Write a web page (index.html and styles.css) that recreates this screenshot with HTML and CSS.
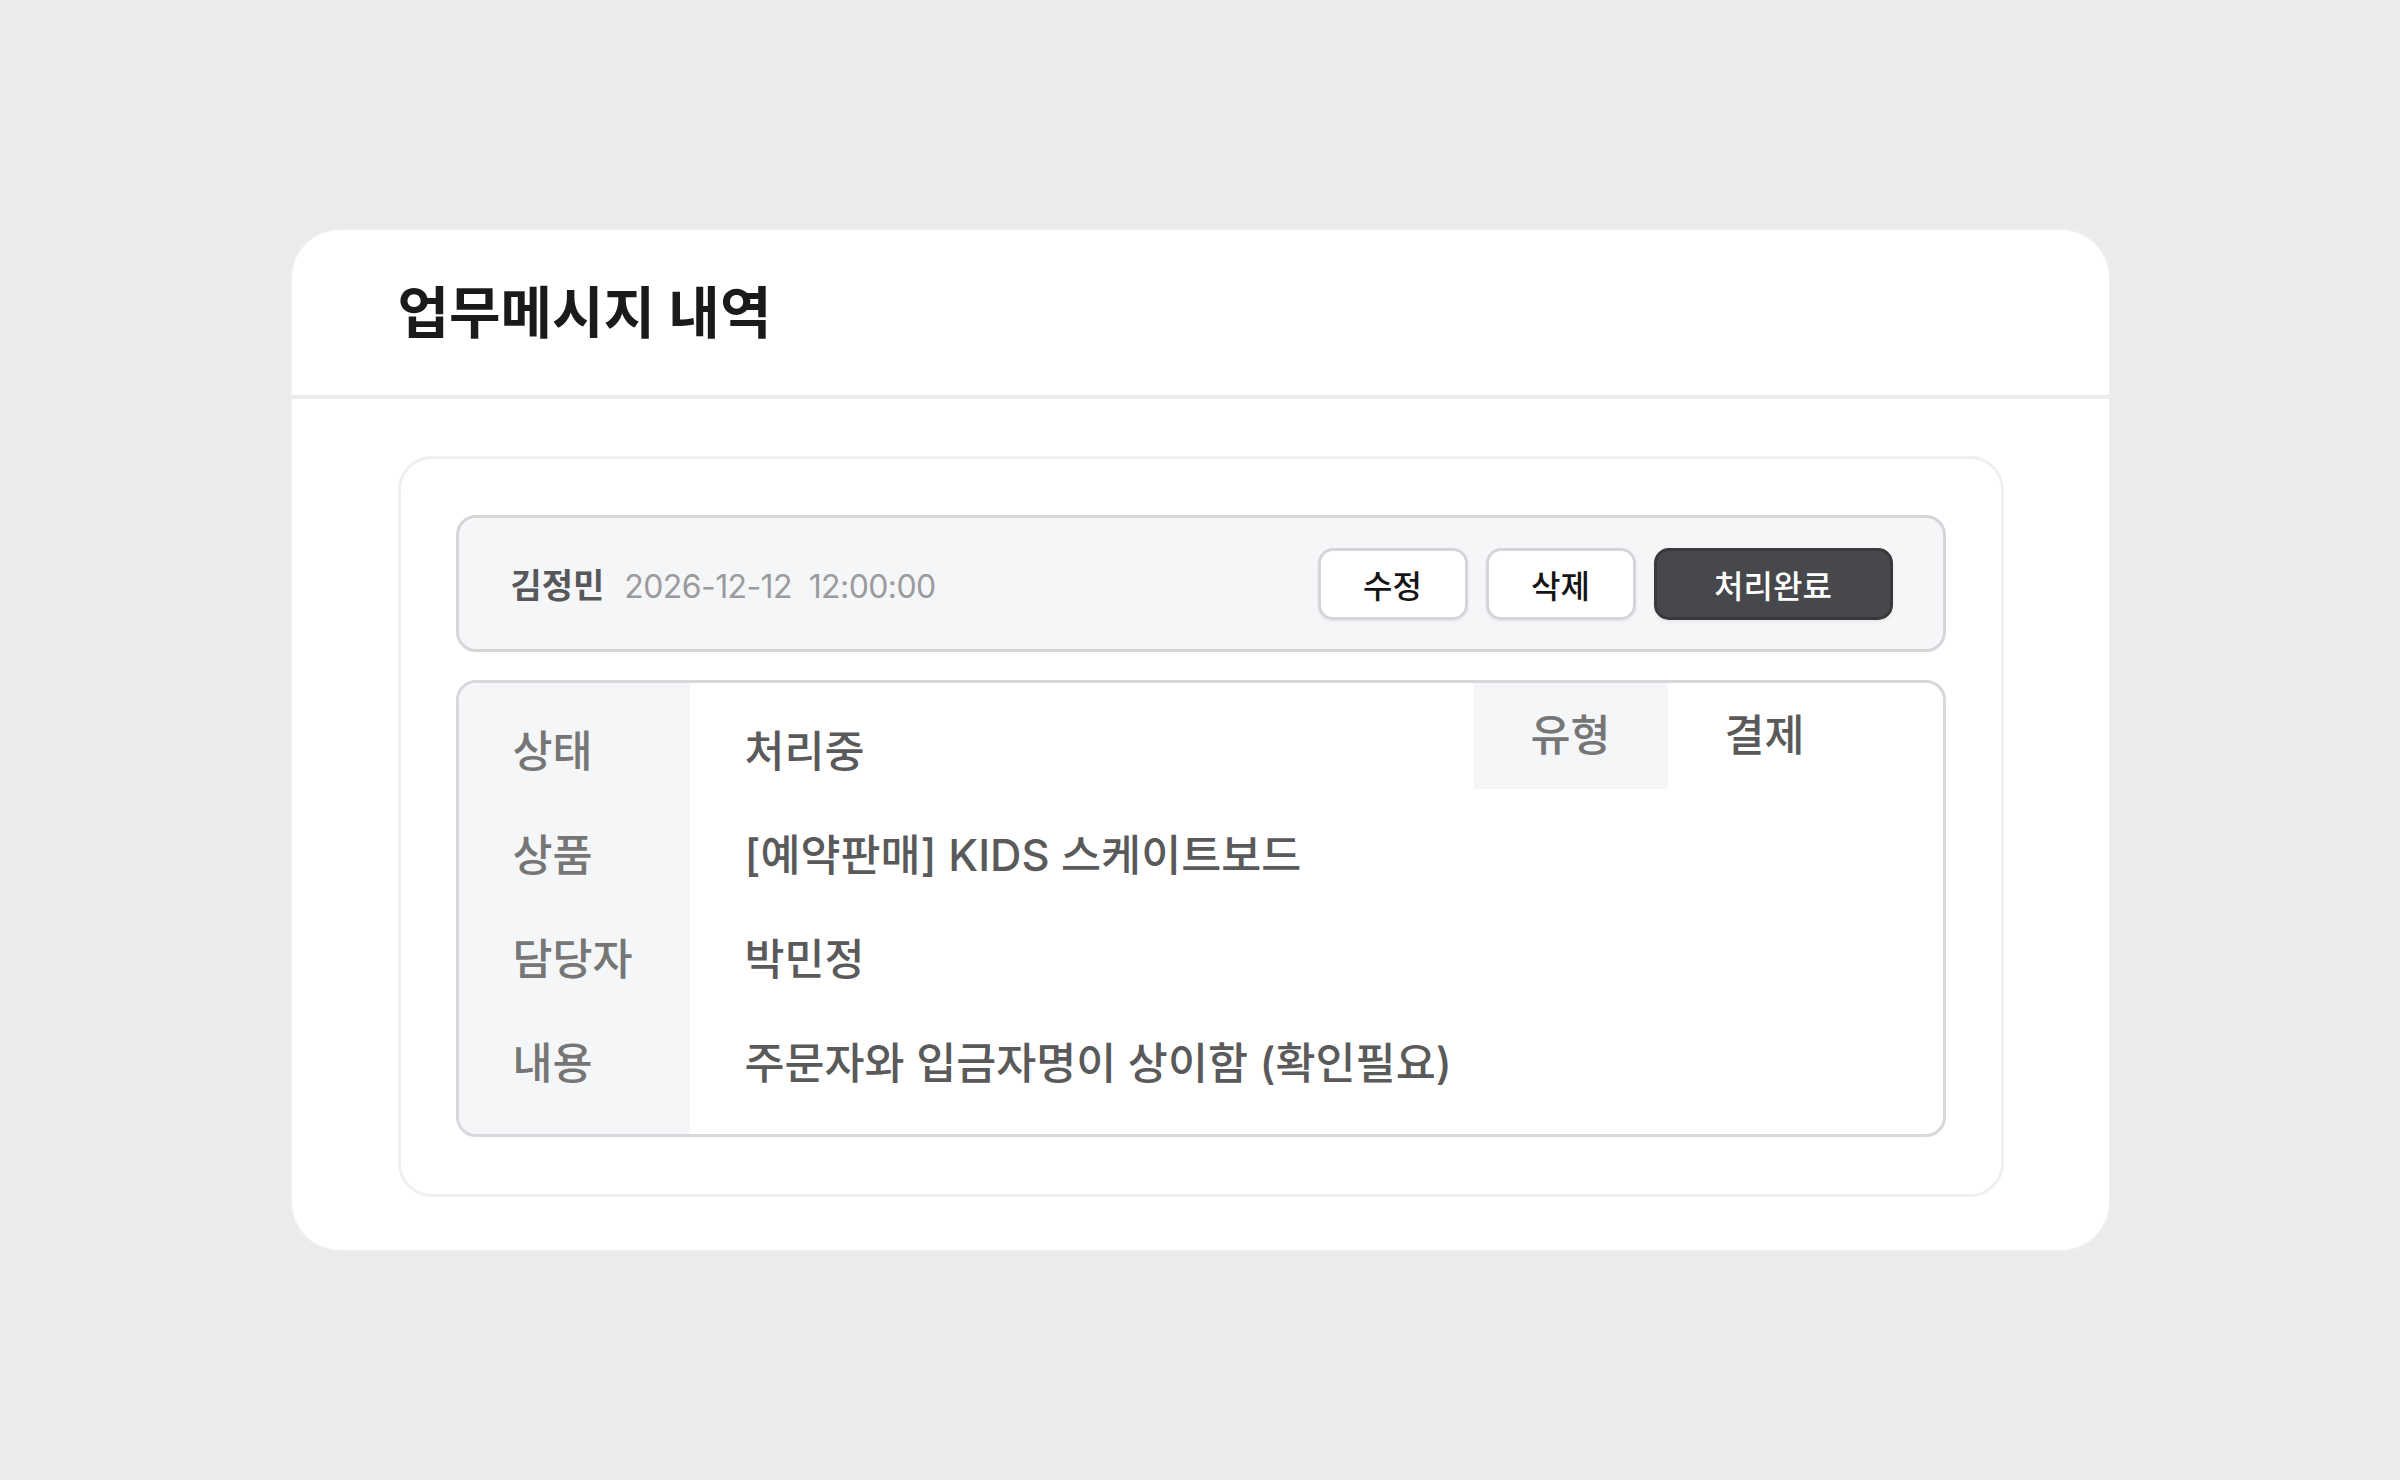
FILE: index.html
```html
<!DOCTYPE html>
<html lang="ko">
<head>
<meta charset="utf-8">
<title>업무메시지 내역</title>
<link rel="stylesheet" href="styles.css">
</head>
<body>
<main class="card">
  <header class="card-head">
    <h1 class="title">업무메시지 내역</h1>
  </header>
  <section class="card-body">
    <div class="message">
      <div class="meta">
        <div class="meta-info">
          <span class="author">김정민</span>
          <span class="date">2026-12-12&nbsp; 12:00:00</span>
        </div>
        <div class="actions">
          <button class="btn">수정</button>
          <button class="btn">삭제</button>
          <button class="btn btn-dark">처리완료</button>
        </div>
      </div>
      <div class="detail">
        <div class="labels">
          <div class="row">상태</div>
          <div class="row">상품</div>
          <div class="row">담당자</div>
          <div class="row">내용</div>
        </div>
        <div class="values">
          <div class="row">처리중</div>
          <div class="row">[예약판매] KIDS 스케이트보드</div>
          <div class="row">박민정</div>
          <div class="row">주문자와 입금자명이 상이함 (확인필요)</div>
        </div>
        <div class="side">
          <div class="side-th">유형</div>
          <div class="side-td">결제</div>
        </div>
      </div>
    </div>
  </section>
</main>
</body>
</html>
```
FILE: styles.css
```css
* { box-sizing: border-box; }
html, body { margin: 0; padding: 0; }
body {
  background: #ebebed;
  min-height: 100vh;
  display: flex;
  align-items: center;
  justify-content: center;
  font-family: Inter, "Noto Sans CJK KR", sans-serif;
}
.card {
  width: 1817px;
  background: #ffffff;
  border-radius: 48px;
  box-shadow: 0 0 0 2px #eeeef0;
}
.card-head {
  height: 169px;
  padding-left: 106px;
  display: flex;
  align-items: center;
  border-bottom: 4px solid #ebebef;
}
.title {
  margin: 0;
  font-size: 56px;
  font-weight: 700;
  color: #1a1a1a;
  line-height: 1;
}
.card-body {
  padding: 57px 105px 53px 106px;
}
.message {
  border: 3px solid #efeff2;
  border-radius: 34px;
  padding: 56px 55px 57px 55px;
}
.meta {
  height: 137px;
  border: 3px solid #d6d6da;
  border-radius: 20px;
  background: #f5f6f8;
  display: flex;
  align-items: center;
  justify-content: space-between;
  padding: 0 50px 0 52px;
}
.meta-info {
  display: flex;
  align-items: baseline;
  gap: 20px;
}
.author {
  font-size: 34px;
  font-weight: 700;
  color: #58585a;
}
.date {
  font-size: 32px;
  letter-spacing: -0.6px;
  color: #9b9b9d;
  font-weight: 400;
}
.actions {
  display: flex;
  gap: 18px;
}
.btn {
  height: 72px;
  width: 150px;
  border: 3px solid #d5d5d9;
  border-radius: 15px;
  background: #ffffff;
  color: #151515;
  font-family: Inter, "Noto Sans CJK KR", sans-serif;
  font-size: 32px;
  font-weight: 500;
  padding: 0;
  box-shadow: 0 2px 3px rgba(0, 0, 0, 0.06);
}
.btn-dark {
  width: 239px;
  background: #47484b;
  border-color: #38393b;
  color: #ffffff;
}
.detail {
  margin-top: 28px;
  border: 3px solid #d8d8dc;
  border-radius: 20px;
  overflow: hidden;
  display: flex;
  align-items: stretch;
}
.labels {
  width: 231px;
  background: #f5f6f8;
  padding: 13px 0 22px 54px;
  color: #767676;
}
.values {
  flex: 1;
  padding: 13px 0 22px 55px;
  color: #5a5a5a;
}
.row {
  height: 104px;
  display: flex;
  align-items: center;
  font-size: 43.5px;
  font-weight: 500;
  white-space: nowrap;
}
.side {
  display: flex;
  align-self: flex-start;
}
.side-th {
  width: 194px;
  height: 106px;
  padding-bottom: 8px;
  background: #f5f6f8;
  color: #767676;
  font-size: 43.5px;
  font-weight: 500;
  display: flex;
  align-items: center;
  justify-content: center;
}
.side-td {
  width: 275px;
  height: 106px;
  padding: 0 0 8px 57px;
  color: #5a5a5a;
  font-size: 43.5px;
  font-weight: 500;
  display: flex;
  align-items: center;
}
```
